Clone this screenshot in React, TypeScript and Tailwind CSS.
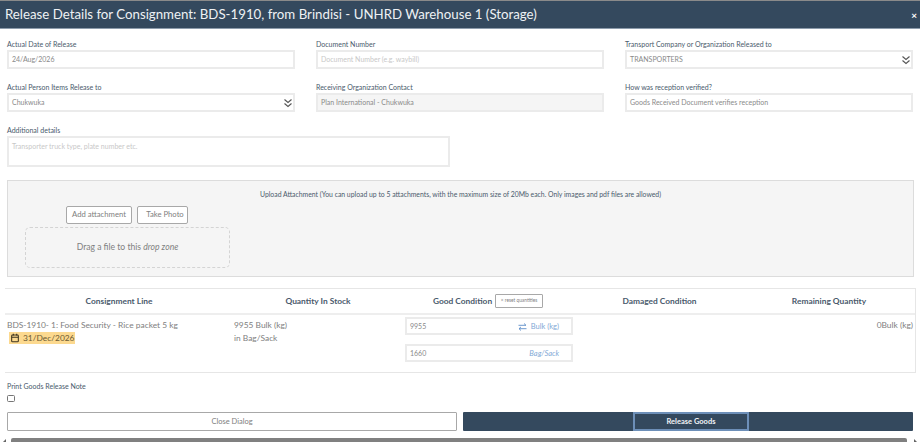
import React from "react";

const font = { fontFamily: "Lato, sans-serif" };

function Chevrons() {
  return (
    <svg width="10" height="10" viewBox="0 0 10 10" fill="none" stroke="#555" strokeWidth="1.1" className="shrink-0">
      <path d="M1.5 1.5 5 4.5l3.5-3M1.5 5.5 5 8.5l3.5-3" />
    </svg>
  );
}

function Field({ label, value, placeholder, select, disabled }: { label: string; value?: string; placeholder?: string; select?: boolean; disabled?: boolean }) {
  return (
    <div className="flex flex-col">
      <div className="h-[11px] text-[7px] leading-[11px] text-[#4a5a6c]">{label}</div>
      <div className={`h-[19px] border-2 border-[#ebebeb] flex items-center justify-between pl-[3px] text-[7px] ${disabled ? "bg-[#f5f5f5]" : "bg-white"} ${value ? "text-[#8a8a8a]" : "text-[#c8c8c8]"}`}>
        <span>{value ?? placeholder}</span>
        {select && <Chevrons />}
      </div>
    </div>
  );
}

export default function App() {
  return (
    <div className="w-[920px] h-[442px] overflow-hidden bg-white flex flex-col relative" style={font}>
      <div className="h-[1px] bg-[#8a8a8a] shrink-0" />
      <div className="h-[28px] bg-[#34495e] border-b border-[#8c9bab] flex items-center justify-between pl-[5px] pr-[3px] shrink-0">
        <span className="text-[13.25px] text-[#eef1f4]">Release Details for Consignment: BDS-1910, from Brindisi - UNHRD Warehouse 1 (Storage)</span>
        <span className="text-[10px] font-bold text-white leading-none">×</span>
      </div>

      <div className="pl-[7px] pt-[10px] pr-[6px]">
        <div className="grid grid-cols-[288px_288px_288px] gap-x-[21px] gap-y-[13px]">
          <Field label="Actual Date of Release" value="24/Aug/2026" />
          <Field label="Document Number" placeholder="Document Number (e.g. waybill)" />
          <Field label="Transport Company or Organization Released to" value="TRANSPORTERS" select />
          <Field label="Actual Person Items Release to" value="Chukwuka" select />
          <Field label="Receiving Organization Contact" value="Plan International - Chukwuka" disabled />
          <Field label="How was reception verified?" value="Goods Received Document verifies reception" />
        </div>
        <div className="mt-[13px] w-[443px]">
          <div className="h-[11px] text-[7px] leading-[11px] text-[#4a5a6c]">Additional details</div>
          <div className="h-[31px] border-2 border-[#ebebeb] pl-[3px] pt-[3px] text-[7px] leading-[10px] text-[#c8c8c8]">Transporter truck type, plate number etc.</div>
        </div>
        <div className="mt-[13px] w-[907px] h-[97px] bg-[#f5f5f5] border border-[#dcdcdc]">
          <div className="pt-[8px] text-center text-[6.85px] leading-[11px] text-[#4a5a6c]">Upload Attachment (You can upload up to 5 attachments, with the maximum size of 20Mb each. Only images and pdf files are allowed)</div>
          <div className="mt-[6px] ml-[58px] flex gap-[5px]">
            <div className="h-[18px] w-[66px] bg-white border border-[#a8a8a8] rounded-[2px] text-[7.7px] text-[#808080] flex items-center justify-center">Add attachment</div>
            <div className="h-[18px] w-[51px] bg-white border border-[#a8a8a8] rounded-[2px] text-[7.7px] text-[#808080] pl-[5px] flex items-center justify-center">Take Photo</div>
          </div>
          <div className="ml-[17px] mt-[3px] w-[205px] h-[41px] border border-dashed border-[#d4d4d4] rounded-[5px] text-[8.6px] text-[#808080] flex items-center justify-center">
            <span>Drag a file to this <em>drop zone</em></span>
          </div>
        </div>
      </div>

      <div className="ml-[5px] mt-[11px] w-[911px] border-t border-b border-r border-[#e6e6e6]">
        <div className="grid grid-cols-[228px_170px_173px_167px_172px] h-[26px] border-b-2 border-[#eeeeee] items-center text-center text-[8.4px] font-bold text-[#4a5a6c]">
          <div>Consignment Line</div>
          <div>Quantity In Stock</div>
          <div className="flex items-center justify-center gap-[3px] pr-[3px]">
            <span>Good Condition</span>
            <span className="h-[14px] w-[48px] border border-[#a8a8a8] rounded-[1px] bg-white text-[4.8px] font-normal text-[#808080] flex items-center justify-center">× reset quantities</span>
          </div>
          <div>Damaged Condition</div>
          <div>Remaining Quantity</div>
        </div>
        <div className="grid grid-cols-[228px_170px_173px_167px_172px] h-[57px] text-[8.4px] leading-[13px] text-[#808080]">
          <div className="pl-[2px] pt-[4px]">
            <div>BDS-1910- 1: Food Security - Rice packet 5 kg</div>
            <div className="ml-[2px] w-[66px] h-[12px] bg-[#fcd98f] flex items-center gap-[3px] pl-[1px] text-[#6b5a32]">
              <svg width="10" height="10" viewBox="0 0 24 24" fill="none" stroke="#3d3420" strokeWidth="2.5"><rect x="4" y="5" width="16" height="16" rx="2" /><path d="M4 10h16M8 2v4M16 2v4" /></svg>
              <span>31/Dec/2026</span>
            </div>
          </div>
          <div className="pl-[1px] pt-[4px]">
            <div>9955 Bulk (kg)</div>
            <div>in Bag/Sack</div>
          </div>
          <div className="pl-[2px] pt-[2px] pr-[2px] flex flex-col gap-[9px]">
            <div className="h-[18px] w-[168px] border-2 border-[#ebebeb] flex items-center justify-between pl-[3px] pr-[12px] text-[7px] text-[#8a8a8a]">
              <span>9955</span>
              <span className="flex items-center gap-[4px] text-[#82a9d6] text-[7.5px] mt-[1px]">
                <svg width="9" height="8" viewBox="0 0 9 8" fill="none" stroke="#5f8fc9" strokeWidth="0.9"><path d="M0.5 2.3h7.5M6 0.5l2 1.8M8.5 5.7H1M3 3.9 1 5.7 3 7.5" /></svg>
                Bulk (kg)
              </span>
            </div>
            <div className="h-[18px] w-[168px] border-2 border-[#ebebeb] flex items-center justify-between pl-[3px] pr-[12px] text-[7px] text-[#8a8a8a]">
              <span>1660</span>
              <span className="italic text-[#82a9d6] text-[7.5px] mt-[1px]">Bag/Sack</span>
            </div>
          </div>
          <div />
          <div className="text-right pr-[2px] pt-[4px]">0Bulk (kg)</div>
        </div>
      </div>

      <div className="pl-[7px] pr-[6px] pt-[8px]">
        <div className="text-[7px] leading-[11px] text-[#4a5a6c]">Print Goods Release Note</div>
        <div className="mt-[3px] w-[8px] h-[7px] border border-[#767676] rounded-[1.5px] bg-white" />
        <div className="mt-[10px] flex gap-[6px] w-[906px]">
          <div className="w-[450px] h-[19px] bg-white border border-[#a8a8a8] rounded-[1px] text-[7.5px] text-[#808080] flex items-center justify-center">Close Dialog</div>
          <div className="w-[450px] h-[19px] bg-[#34495e] rounded-[1px] flex items-center justify-center pl-[6px]">
            <div className="w-[116px] h-[19px] border-2 border-[#6d8fb8] text-[7.5px] font-bold text-[#f2f4f6] flex items-center justify-center">Release Goods</div>
          </div>
        </div>
      </div>

      <div className="absolute left-[11px] w-[896px] bottom-0 h-[4px] bg-[#808080] rounded-t-[2px]" />
      <svg className="absolute left-[3px] bottom-0" width="4" height="3" viewBox="0 0 4 3"><path d="M3 0v3H0z" fill="#666" /></svg>
      <svg className="absolute left-[913px] bottom-0" width="4" height="3" viewBox="0 0 4 3"><path d="M1 0v3h3z" fill="#666" /></svg>
    </div>
  );
}
